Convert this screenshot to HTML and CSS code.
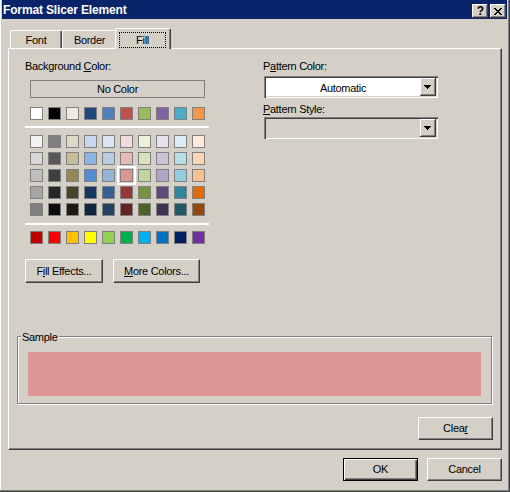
FILE: index.html
```html
<!DOCTYPE html>
<html>
<head>
<meta charset="utf-8">
<title>Format Slicer Element</title>
<link rel="stylesheet" href="styles.css">
</head>
<body>
<div class="window">
  <div class="titlebar">
    <span class="title">Format Slicer Element</span>
    <div class="tbtns">
      <span class="tbtn help">?</span>
      <span class="tbtn close"><svg width="8" height="7" viewBox="0 0 8 7"><path d="M0 0h2v1h-2z M6 0h2v1h-2z M1 1h2v1h-2z M5 1h2v1h-2z M2 2h4v1h-4z M3 3h2v1h-2z M2 4h4v1h-4z M1 5h2v1h-2z M5 5h2v1h-2z M0 6h2v1h-2z M6 6h2v1h-2z" fill="#000"/></svg></span>
    </div>
  </div>

  <div class="tabs">
    <div class="tab tab-font">Font</div>
    <div class="tab tab-border">Border</div>
    <div class="tab tab-fill"><div class="focus">Fill</div></div>
  </div>

  <div class="panel">
    <div class="top">
      <div class="left">
        <div class="label">Background <u>C</u>olor:</div>
        <div class="nocolor">No Color</div>
        <div class="swrow first">
          <span class="sw" style="background:#ffffff"></span>
          <span class="sw" style="background:#000000"></span>
          <span class="sw" style="background:#eeece1"></span>
          <span class="sw" style="background:#1f497d"></span>
          <span class="sw" style="background:#4f81bd"></span>
          <span class="sw" style="background:#c0504d"></span>
          <span class="sw" style="background:#9bbb59"></span>
          <span class="sw" style="background:#8064a2"></span>
          <span class="sw" style="background:#4bacc6"></span>
          <span class="sw" style="background:#f79646"></span>
        </div>
        <div class="sep sep1"></div>
        <div class="grid">
          <div class="swrow">
            <span class="sw" style="background:#f2f2f2"></span>
            <span class="sw" style="background:#7f7f7f"></span>
            <span class="sw" style="background:#ddd9c3"></span>
            <span class="sw" style="background:#c6d9f0"></span>
            <span class="sw" style="background:#dbe5f1"></span>
            <span class="sw" style="background:#f2dcdb"></span>
            <span class="sw" style="background:#ebf1dd"></span>
            <span class="sw" style="background:#e5e0ec"></span>
            <span class="sw" style="background:#dbeef3"></span>
            <span class="sw" style="background:#fdeada"></span>
          </div>
          <div class="swrow">
            <span class="sw" style="background:#d8d8d8"></span>
            <span class="sw" style="background:#595959"></span>
            <span class="sw" style="background:#c4bd97"></span>
            <span class="sw" style="background:#8db3e2"></span>
            <span class="sw" style="background:#b8cce4"></span>
            <span class="sw" style="background:#e5b9b7"></span>
            <span class="sw" style="background:#d7e3bc"></span>
            <span class="sw" style="background:#ccc1d9"></span>
            <span class="sw" style="background:#b7dde8"></span>
            <span class="sw" style="background:#fbd5b5"></span>
          </div>
          <div class="swrow">
            <span class="sw" style="background:#bfbfbf"></span>
            <span class="sw" style="background:#3f3f3f"></span>
            <span class="sw" style="background:#938953"></span>
            <span class="sw" style="background:#548dd4"></span>
            <span class="sw" style="background:#95b3d7"></span>
            <span class="sw sel" style="background:#d99694"></span>
            <span class="sw" style="background:#c3d69b"></span>
            <span class="sw" style="background:#b2a2c7"></span>
            <span class="sw" style="background:#92cddc"></span>
            <span class="sw" style="background:#fac08f"></span>
          </div>
          <div class="swrow">
            <span class="sw" style="background:#a5a5a5"></span>
            <span class="sw" style="background:#262626"></span>
            <span class="sw" style="background:#494429"></span>
            <span class="sw" style="background:#17365d"></span>
            <span class="sw" style="background:#366092"></span>
            <span class="sw" style="background:#953734"></span>
            <span class="sw" style="background:#76923c"></span>
            <span class="sw" style="background:#5f497a"></span>
            <span class="sw" style="background:#31859b"></span>
            <span class="sw" style="background:#e36c09"></span>
          </div>
          <div class="swrow">
            <span class="sw" style="background:#7f7f7f"></span>
            <span class="sw" style="background:#0c0c0c"></span>
            <span class="sw" style="background:#1d1b10"></span>
            <span class="sw" style="background:#0f243e"></span>
            <span class="sw" style="background:#244061"></span>
            <span class="sw" style="background:#632423"></span>
            <span class="sw" style="background:#4f6128"></span>
            <span class="sw" style="background:#3f3151"></span>
            <span class="sw" style="background:#205867"></span>
            <span class="sw" style="background:#974806"></span>
          </div>
        </div>
        <div class="sep sep2"></div>
        <div class="swrow std">
          <span class="sw" style="background:#c00000"></span>
          <span class="sw" style="background:#ff0000"></span>
          <span class="sw" style="background:#ffc000"></span>
          <span class="sw" style="background:#ffff00"></span>
          <span class="sw" style="background:#92d050"></span>
          <span class="sw" style="background:#00b050"></span>
          <span class="sw" style="background:#00b0f0"></span>
          <span class="sw" style="background:#0070c0"></span>
          <span class="sw" style="background:#002060"></span>
          <span class="sw" style="background:#7030a0"></span>
        </div>
        <div class="btnrow">
          <button class="btn btn-fx">F<u>i</u>ll Effects...</button>
          <button class="btn btn-more"><u>M</u>ore Colors...</button>
        </div>
      </div>
      <div class="right">
        <div class="label">P<u>a</u>ttern Color:</div>
        <div class="combo combo1">
          <span class="val">Automatic</span>
          <span class="drop"><svg width="7" height="4" viewBox="0 0 7 4"><path d="M0 0h7v1h-1v1h-1v1h-1v1h-1v-1h-1v-1h-1v-1h-1z" fill="#000"/></svg></span>
        </div>
        <div class="label label2"><u>P</u>attern Style:</div>
        <div class="combo combo2">
          <span class="val"></span>
          <span class="drop"><svg width="7" height="4" viewBox="0 0 7 4"><path d="M0 0h7v1h-1v1h-1v1h-1v1h-1v-1h-1v-1h-1v-1h-1z" fill="#000"/></svg></span>
        </div>
      </div>
    </div>

    <div class="group">
      <span class="legend">Sample</span>
      <div class="sample"></div>
    </div>

    <div class="clearrow">
      <button class="btn">Clea<u>r</u></button>
    </div>
  </div>

  <div class="footer">
    <button class="btn default">OK</button>
    <button class="btn">Cancel</button>
  </div>
</div>
</body>
</html>
```
FILE: styles.css
```css
* { box-sizing: border-box; }
html, body { margin: 0; padding: 0; }
body {
  font-family: "Liberation Sans", Arial, sans-serif;
  font-size: 11px;
  letter-spacing: -0.3px;
  color: #000;
  background: #d4d0c8;
}
u { text-decoration: underline; text-underline-offset: 1px; }

.window {
  width: 510px;
  height: 492px;
  background: #d4d0c8;
  overflow: hidden;
  box-shadow: inset -1px -1px #404040, inset -2px -2px #808080, inset 1px 0 #ffffff;
}

/* title bar */
.titlebar {
  height: 19px;
  margin: 0 3px 0 2px;
  padding: 0 1px;
  background: #0a246a;
  display: flex;
  align-items: flex-start;
  justify-content: space-between;
}
.title {
  color: #fff;
  font-weight: bold;
  font-size: 12px;
  letter-spacing: -0.15px;
  line-height: 17px;
  margin-top: 2px;
}
.tbtns { display: flex; gap: 2px; margin-top: 4px; }
.tbtn {
  width: 16px;
  height: 14px;
  background: #d4d0c8;
  box-shadow: inset -1px -1px #404040, inset 1px 1px #ffffff, inset -2px -2px #808080;
  display: flex;
  align-items: center;
  justify-content: center;
}
.help { font-weight: bold; font-size: 12px; line-height: 14px; letter-spacing: 0; padding-left: 1px; }
.close svg { display: block; margin-top: 0; }

/* tabs */
.tabs {
  display: flex;
  align-items: flex-end;
  height: 20px;
  margin: 9px 0 0 10px;
  position: relative;
  z-index: 1;
}
.tab {
  height: 18px;
  background: #d4d0c8;
  border-top: 1px solid #fff;
  border-left: 1px solid #fff;
  border-right: 1px solid #404040;
  box-shadow: inset -1px 0 #808080;
  border-radius: 2px 2px 0 0;
  text-align: center;
  padding-top: 3px;
  line-height: 13px;
}
.tab-font { width: 52px; }
.tab-border { width: 55px; }
.tab-fill {
  width: 56px;
  height: 21px;
  margin-left: -2px;
  margin-bottom: -1px;
  padding-top: 0;
}
.focus {
  margin: 3px 4px 0 3px;
  height: 16px;
  border: 1px dotted #000;
  line-height: 14px;
}

/* panel */
.panel {
  margin-left: 8px;
  width: 494px;
  height: 402px;
  border-top: 1px solid #fff;
  border-left: 1px solid #fff;
  border-right: 1px solid #404040;
  border-bottom: 1px solid #404040;
  box-shadow: inset -1px -1px #808080;
  padding-top: 11px;
  display: flex;
  flex-direction: column;
}
.top { display: flex; gap: 54px; padding-left: 16px; }
.left { width: 184px; }
.right { width: 175px; }
.label { line-height: 13px; height: 13px; white-space: nowrap; }

.nocolor {
  margin: 7px 0 0 5px;
  width: 175px;
  height: 18px;
  border: 1px solid #808080;
  text-align: center;
  line-height: 16px;
}
.swrow { display: flex; gap: 5px; margin-left: 5px; }
.swrow.first { margin-top: 9px; }
.sw {
  display: block;
  width: 13px;
  height: 13px;
  border: 1px solid #808080;
}
.sw.sel { outline: 2px solid #fff; outline-offset: 1px; }
.sep { height: 2px; background: #fff; width: 184px; }
.sep1 { margin-top: 6px; }
.sep2 { margin-top: 7px; }
.grid { display: flex; flex-direction: column; gap: 4px; margin-top: 7px; }
.swrow.std { margin-top: 6px; }

.btnrow { display: flex; gap: 10px; margin-top: 15px; }

.btn {
  font-family: inherit;
  font-size: 11px;
  letter-spacing: -0.3px;
  line-height: 13px;
  color: #000;
  width: 75px;
  height: 23px;
  padding: 0;
  background: #d4d0c8;
  border: 1px solid;
  border-color: #fff #404040 #404040 #fff;
  box-shadow: inset -1px -1px #808080;
  text-align: center;
  border-radius: 0;
}
.btn-fx { width: 78px; height: 24px; }
.btn-more { width: 87px; height: 24px; }
.btn.default {
  border: 1px solid #000;
  box-shadow: inset 1px 1px #fff, inset -1px -1px #404040, inset -2px -2px #808080;
}

/* combos */
.combo {
  margin-left: 1px;
  width: 174px;
  height: 22px;
  padding: 2px;
  display: flex;
  box-shadow: inset 1px 1px #808080, inset 2px 2px #404040, inset -1px -1px #fff, inset -2px -2px #d4d0c8;
}
.combo1 { margin-top: 3px; background: #fff; }
.combo2 { margin-top: 1px; background: #d4d0c8; }
.label2 { margin-top: 5px; }
.val { flex: 1; text-align: center; line-height: 18px; padding-top: 1px; }
.drop {
  width: 16px;
  height: 18px;
  background: #d4d0c8;
  box-shadow: inset -1px -1px #404040, inset 1px 1px #fff, inset -2px -2px #808080;
  display: flex;
  align-items: center;
  justify-content: center;
}
.drop svg { display: block; margin-left: -1px; }

/* sample group */
.group {
  position: relative;
  margin: 53px 0 0 8px;
  width: 475px;
  border: 1px solid #808080;
  box-shadow: 1px 1px 0 #fff, inset 1px 1px 0 #fff;
  padding: 15px 0 7px 10px;
}
.legend {
  position: absolute;
  top: -6px;
  left: 3px;
  padding: 0 1px;
  background: #d4d0c8;
  line-height: 13px;
}
.sample { width: 453px; height: 44px; background: #de9694; }

.clearrow { display: flex; justify-content: flex-end; margin-top: 13px; padding-right: 8px; }

/* footer */
.footer { display: flex; justify-content: flex-end; gap: 9px; margin-top: 8px; padding-right: 8px; }
```
